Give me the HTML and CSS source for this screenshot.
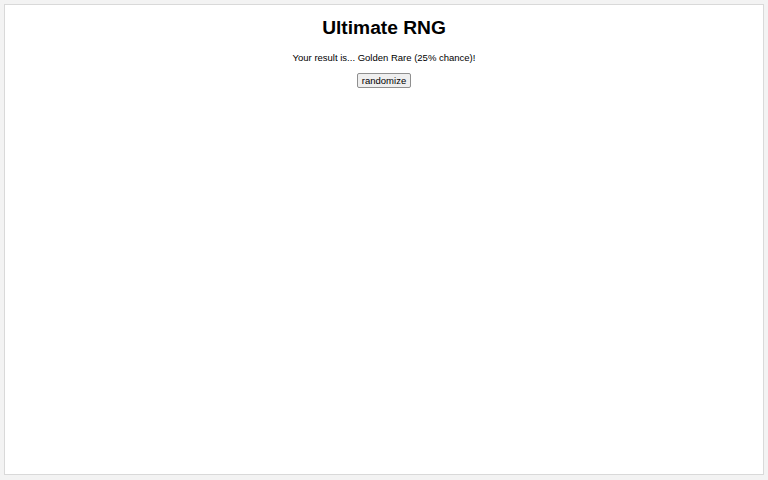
FILE: index.html
```html
<!DOCTYPE html>
<html lang="en">
<head>
    <meta charset="UTF-8">
    <title>Ultimate RNG</title>
    <link rel="stylesheet" href="styles.css">
</head>
<body>
    <div class="page">
        <h1 class="title">Ultimate RNG</h1>
        <p class="result">Your result is... Golden Rare (25% chance)!</p>
        <button class="button">randomize</button>
    </div>
</body>
</html>
```

FILE: styles.css
```css
/* General Styles */
html, body {
    height: 100%;
}

body {
    margin: 0;
    padding: 4px 4px 5px;
    box-sizing: border-box;
    background: #f3f3f3;
    font-family: "Liberation Sans", Arial, sans-serif;
    color: #000;
}

/* Main Card */
.page {
    height: 100%;
    box-sizing: border-box;
    background: #fff;
    border: 1px solid #d9d9d9;
    display: flex;
    flex-direction: column;
    align-items: center;
    padding-top: 12px;
}

.title {
    font-size: 19.2px;
    font-weight: bold;
    margin: 0;
    line-height: 22px;
}

.result {
    font-size: 9.5px;
    margin: 13px 0 0;
    line-height: 12px;
}

.button {
    margin-top: 9px;
    font-family: inherit;
    font-size: 9.5px;
    padding: 1px 4px;
    background: #efefef;
    border: 1px solid #8f8f8f;
    border-radius: 2px;
    color: #000;
}
```
